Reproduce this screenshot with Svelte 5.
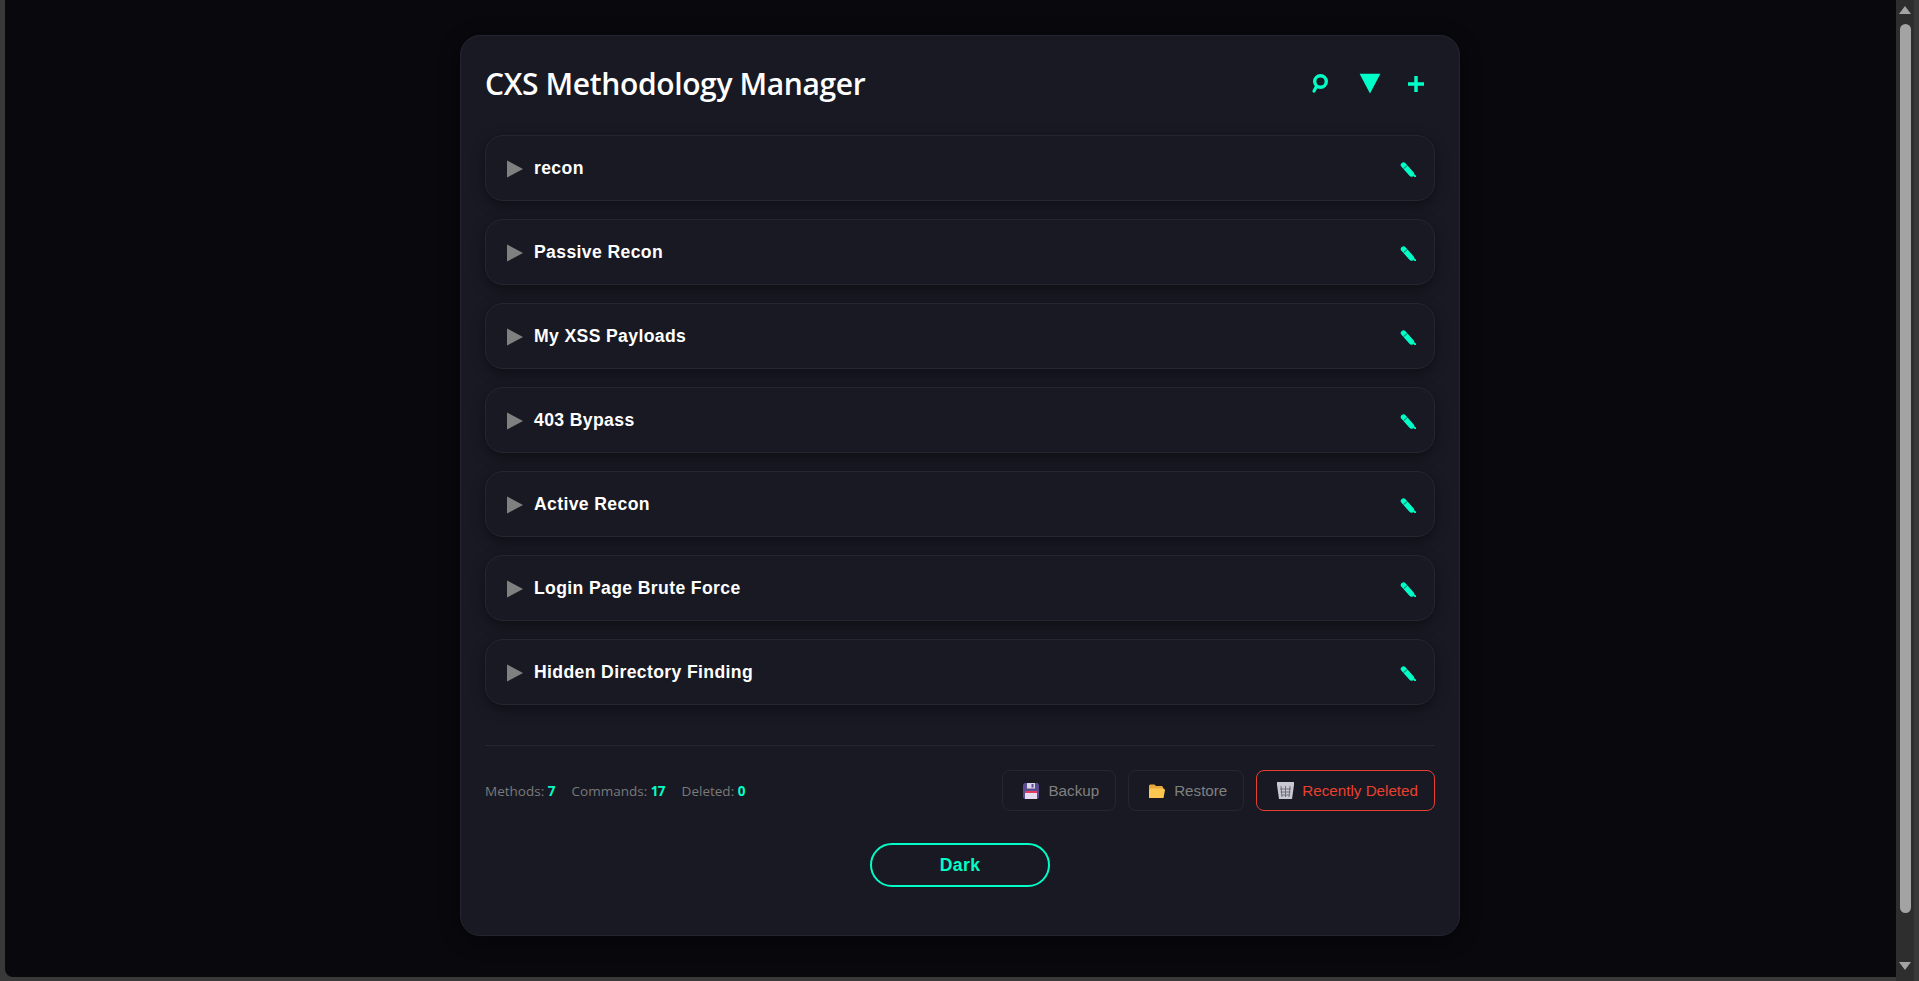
<script lang="ts">
	const methods = [
		"recon",
		"Passive Recon",
		"My XSS Payloads",
		"403 Bypass",
		"Active Recon",
		"Login Page Brute Force",
		"Hidden Directory Finding",
	]
	const stats = [
		{ label: "Methods:", value: methods.length },
		{ label: "Commands:", value: 17 },
		{ label: "Deleted:", value: 0 },
	]
</script>

<div class="window">
	<main>
		<section class="card">
			<header>
				<h1>CXS Methodology Manager</h1>
				<div class="tools">
					<button class="tool" aria-label="Search">
						<svg width="22" height="22" viewBox="0 0 22 22">
							<circle cx="9.500" cy="8.500" r="5.800" fill="none" stroke="#00ffc8" stroke-width="3.400" />
							<path d="M5.500 13.500 3 18" fill="none" stroke="#00ffc8" stroke-width="3.200" stroke-linecap="round" />
						</svg>
					</button>
					<button class="tool" aria-label="Collapse">
						<svg width="22" height="22" viewBox="0 0 22 22">
							<path d="M.6 .8h20.800L11 20.500z" fill="#00ffc8" />
						</svg>
					</button>
					<button class="tool" aria-label="Add">
						<svg width="18" height="18" viewBox="0 0 18 18">
							<path d="M1 9h16M9 1v16" stroke="#00ffc8" stroke-width="3.400" />
						</svg>
					</button>
				</div>
			</header>

			<div class="list">
				{#each methods as name}
					<article class="row">
						<svg class="caret" width="16" height="18" viewBox="0 0 16 18">
							<path d="M0 .5 16 9 0 17.500z" fill="#808080" />
						</svg>
						<span class="name">{name}</span>
						<svg class="edit" width="16" height="18" viewBox="0 0 16 18">
							<path d="M3.500 6 11.500 15" stroke="#00ffc8" stroke-width="5.400" stroke-linecap="round" />
							<path d="M3.700 9.600 7.400 6.300" stroke="#181922" stroke-width="0.700" />
							<path d="M13.800 16 15.800 18" stroke="#00ffc8" stroke-width="2" />
						</svg>
					</article>
				{/each}
			</div>

			<footer>
				<div class="stats">
					{#each stats as s}
						<span>{s.label} <b>{s.value}</b></span>
					{/each}
				</div>
				<div class="actions">
					<button class="action">
						<svg width="16" height="16" viewBox="0 0 16 16">
							<path d="M0 1.500 1.500 0h13L16 1.500v13L14.500 16h-13L0 14.500z" fill="#5b4b8f" />
							<rect x="4" y="0" width="8" height="5.500" fill="#d9d5e6" />
							<rect x="8.500" y="1" width="2" height="3.500" fill="#5b4b8f" />
							<rect x="2" y="8" width="12" height="8" fill="#e4dcef" />
							<rect x="2" y="8" width="12" height="2" fill="#e0405e" />
						</svg>
						Backup
					</button>
					<button class="action">
						<svg width="16" height="16" viewBox="0 0 16 16">
							<path d="M0 2.500 1 1.500h4.500L7 3h6l1 1v3H0z" fill="#e8a93a" />
							<path d="M0 15V7l1-1.500h14L16 7l-1.500 8z" fill="#fdc650" />
						</svg>
						Restore
					</button>
					<button class="action danger">
						<svg width="17" height="17" viewBox="0 0 17 17">
							<path d="M0 0h17v3l-2 14H2L0 3z" fill="#c9c8d2" />
							<path d="M4 4l1 11M8.500 4v11M13 4l-1 11M3 7h11M3.500 10h10M4 13h9" stroke="#6f6e7c" stroke-width="1" />
						</svg>
						Recently Deleted
					</button>
				</div>
			</footer>

			<div class="theme">
				<button class="pill">Dark</button>
			</div>
		</section>
	</main>

	<aside class="scrollbar">
		<span class="arrow up"></span>
		<span class="thumb"></span>
		<span class="arrow down"></span>
	</aside>
</div>

<style>
	:global(body) {
		background: #393939;
	}

	.window {
		display: flex;
		height: 981px;
		width: 1919px;
		overflow: hidden;
		box-sizing: border-box;
		padding: 0 5px 4px 5px;
		background: #393939;
	}

	main {
		flex: 1;
		box-sizing: border-box;
		padding: 35px 0 0 19px;
		background: #08080d;
		border-bottom-left-radius: 8px;
	}

	.card {
		box-sizing: border-box;
		width: 1000px;
		height: 901px;
		margin: 0 auto;
		padding: 24px;
		background: #181922;
		border: 1px solid #252532;
		border-radius: 20px;
		box-shadow: 0 4px 20px #0006;
	}

	header {
		display: flex;
		justify-content: space-between;
		align-items: center;
		height: 48px;
		margin-bottom: 27px;
	}

	h1 {
		margin: 0 0 2px;
		font: 600 30px "Open Sans", sans-serif;
		letter-spacing: -0.36px;
		color: #fff;
	}

	.tools {
		display: flex;
		align-items: center;
		gap: 26px;
		padding-right: 10px;
	}

	.tool {
		display: flex;
		padding: 0;
		background: none;
		border: none;
	}

	.list {
		display: flex;
		flex-direction: column;
		gap: 18px;
	}

	.row {
		display: flex;
		align-items: center;
		box-sizing: border-box;
		height: 66px;
		padding: 0 18px 0 21px;
		background: #181922;
		border: 1px solid #262633;
		border-radius: 18px;
		box-shadow: 0 4px 14px #0006;
	}

	.caret {
		margin-top: 1px;
	}

	.name {
		flex: 1;
		margin-left: 11px;
		font: 700 17.6px "Liberation Sans", sans-serif;
		letter-spacing: 0.37px;
		color: #fff;
	}

	footer {
		display: flex;
		justify-content: space-between;
		align-items: center;
		margin-top: 40px;
		padding-top: 24px;
		border-top: 1px solid #262633;
	}

	.stats {
		display: flex;
		gap: 17px;
		font: 400 13.5px "Open Sans", sans-serif;
		color: #7a7a7a;
	}

	.stats b {
		color: #00ffc8;
		font-weight: 700;
		letter-spacing: -0.8px;
	}

	.actions {
		display: flex;
		gap: 12px;
	}

	.action {
		display: flex;
		align-items: center;
		gap: 9px;
		height: 41px;
		padding: 0 16px 0 20px;
		background: none;
		border: 1px solid #262633;
		border-radius: 8px;
		font: 400 15.2px "Liberation Sans", sans-serif;
		color: #808080;
	}

	.action.danger {
		gap: 8px;
		border-color: #e8412f;
		color: #e8412f;
	}

	.theme {
		display: flex;
		justify-content: center;
		margin-top: 32px;
	}

	.pill {
		width: 180px;
		height: 44px;
		background: none;
		border: 2px solid #00ffc8;
		border-radius: 22px;
		font: 700 17.6px "Liberation Sans", sans-serif;
		letter-spacing: 0.37px;
		color: #00ffc8;
	}

	.scrollbar {
		display: flex;
		flex-direction: column;
		align-items: center;
		width: 18px;
		background: #2e2e2e;
		margin-bottom: -4px;
	}

	.arrow {
		width: 0;
		height: 0;
		border-left: 6px solid transparent;
		border-right: 6px solid transparent;
	}

	.arrow.up {
		margin-top: 6px;
		border-bottom: 8px solid #a3a3a3;
	}

	.arrow.down {
		margin-top: auto;
		margin-bottom: 11px;
		border-top: 8px solid #a3a3a3;
	}

	.thumb {
		width: 11px;
		height: 889px;
		margin-top: 10px;
		background: #a3a3a3;
		border-radius: 6px;
	}
</style>
